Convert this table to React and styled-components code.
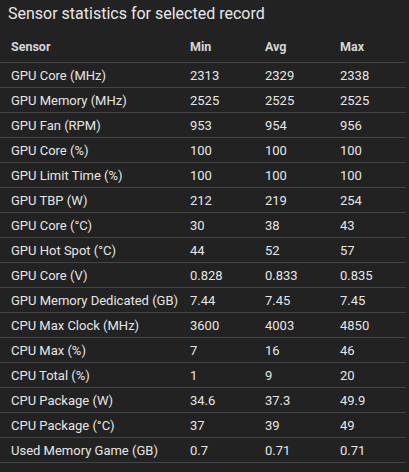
import React from "react";
import styled, { createGlobalStyle } from "styled-components";

const Global = createGlobalStyle`
  html, body { margin: 0; padding: 0; background: #222222; }
  body { font-family: Roboto, "Noto Sans", sans-serif; color: #e6e6e6; }
`;

const Panel = styled.div`
  width: 409px;
  height: 472px;
  background: #222222;
  box-sizing: border-box;
  padding-right: 3px;
  display: flex;
  flex-direction: column;
`;

const Title = styled.h2`
  margin: 0;
  padding: 3px 0 0 8px;
  height: 31px;
  box-sizing: border-box;
  font-size: 16px;
  font-weight: 400;
  line-height: 22px;
  color: #e8e8e8;
`;

const Table = styled.div`
  display: flex;
  flex-direction: column;
`;

const Row = styled.div`
  display: grid;
  grid-template-columns: 179px 75px 75px 1fr;
  align-items: center;
  height: ${(p) => (p.$head ? "32px" : "25px")};
  border-bottom: 1px solid #444444;
  box-sizing: border-box;
  padding-left: 11px;
  font-size: ${(p) => (p.$head ? "12.5px" : "13px")};
  font-weight: ${(p) => (p.$head ? 700 : 400)};
  color: ${(p) => (p.$head ? "#d6d6d6" : "#e6e6e6")};
`;

const Cell = styled.span`
  white-space: nowrap;
`;

const rows = [
  ["GPU Core (MHz)", "2313", "2329", "2338"],
  ["GPU Memory (MHz)", "2525", "2525", "2525"],
  ["GPU Fan (RPM)", "953", "954", "956"],
  ["GPU Core (%)", "100", "100", "100"],
  ["GPU Limit Time (%)", "100", "100", "100"],
  ["GPU TBP (W)", "212", "219", "254"],
  ["GPU Core (°C)", "30", "38", "43"],
  ["GPU Hot Spot (°C)", "44", "52", "57"],
  ["GPU Core (V)", "0.828", "0.833", "0.835"],
  ["GPU Memory Dedicated (GB)", "7.44", "7.45", "7.45"],
  ["CPU Max Clock (MHz)", "3600", "4003", "4850"],
  ["CPU Max (%)", "7", "16", "46"],
  ["CPU Total (%)", "1", "9", "20"],
  ["CPU Package (W)", "34.6", "37.3", "49.9"],
  ["CPU Package (°C)", "37", "39", "49"],
  ["Used Memory Game (GB)", "0.7", "0.71", "0.71"],
];

export default function App() {
  return (
    <>
      <Global />
      <Panel>
        <Title>Sensor statistics for selected record</Title>
        <Table>
          <Row $head>
            <Cell>Sensor</Cell>
            <Cell>Min</Cell>
            <Cell>Avg</Cell>
            <Cell>Max</Cell>
          </Row>
          {rows.map((r) => (
            <Row key={r[0]}>
              {r.map((c, i) => (
                <Cell key={i}>{c}</Cell>
              ))}
            </Row>
          ))}
        </Table>
      </Panel>
    </>
  );
}
